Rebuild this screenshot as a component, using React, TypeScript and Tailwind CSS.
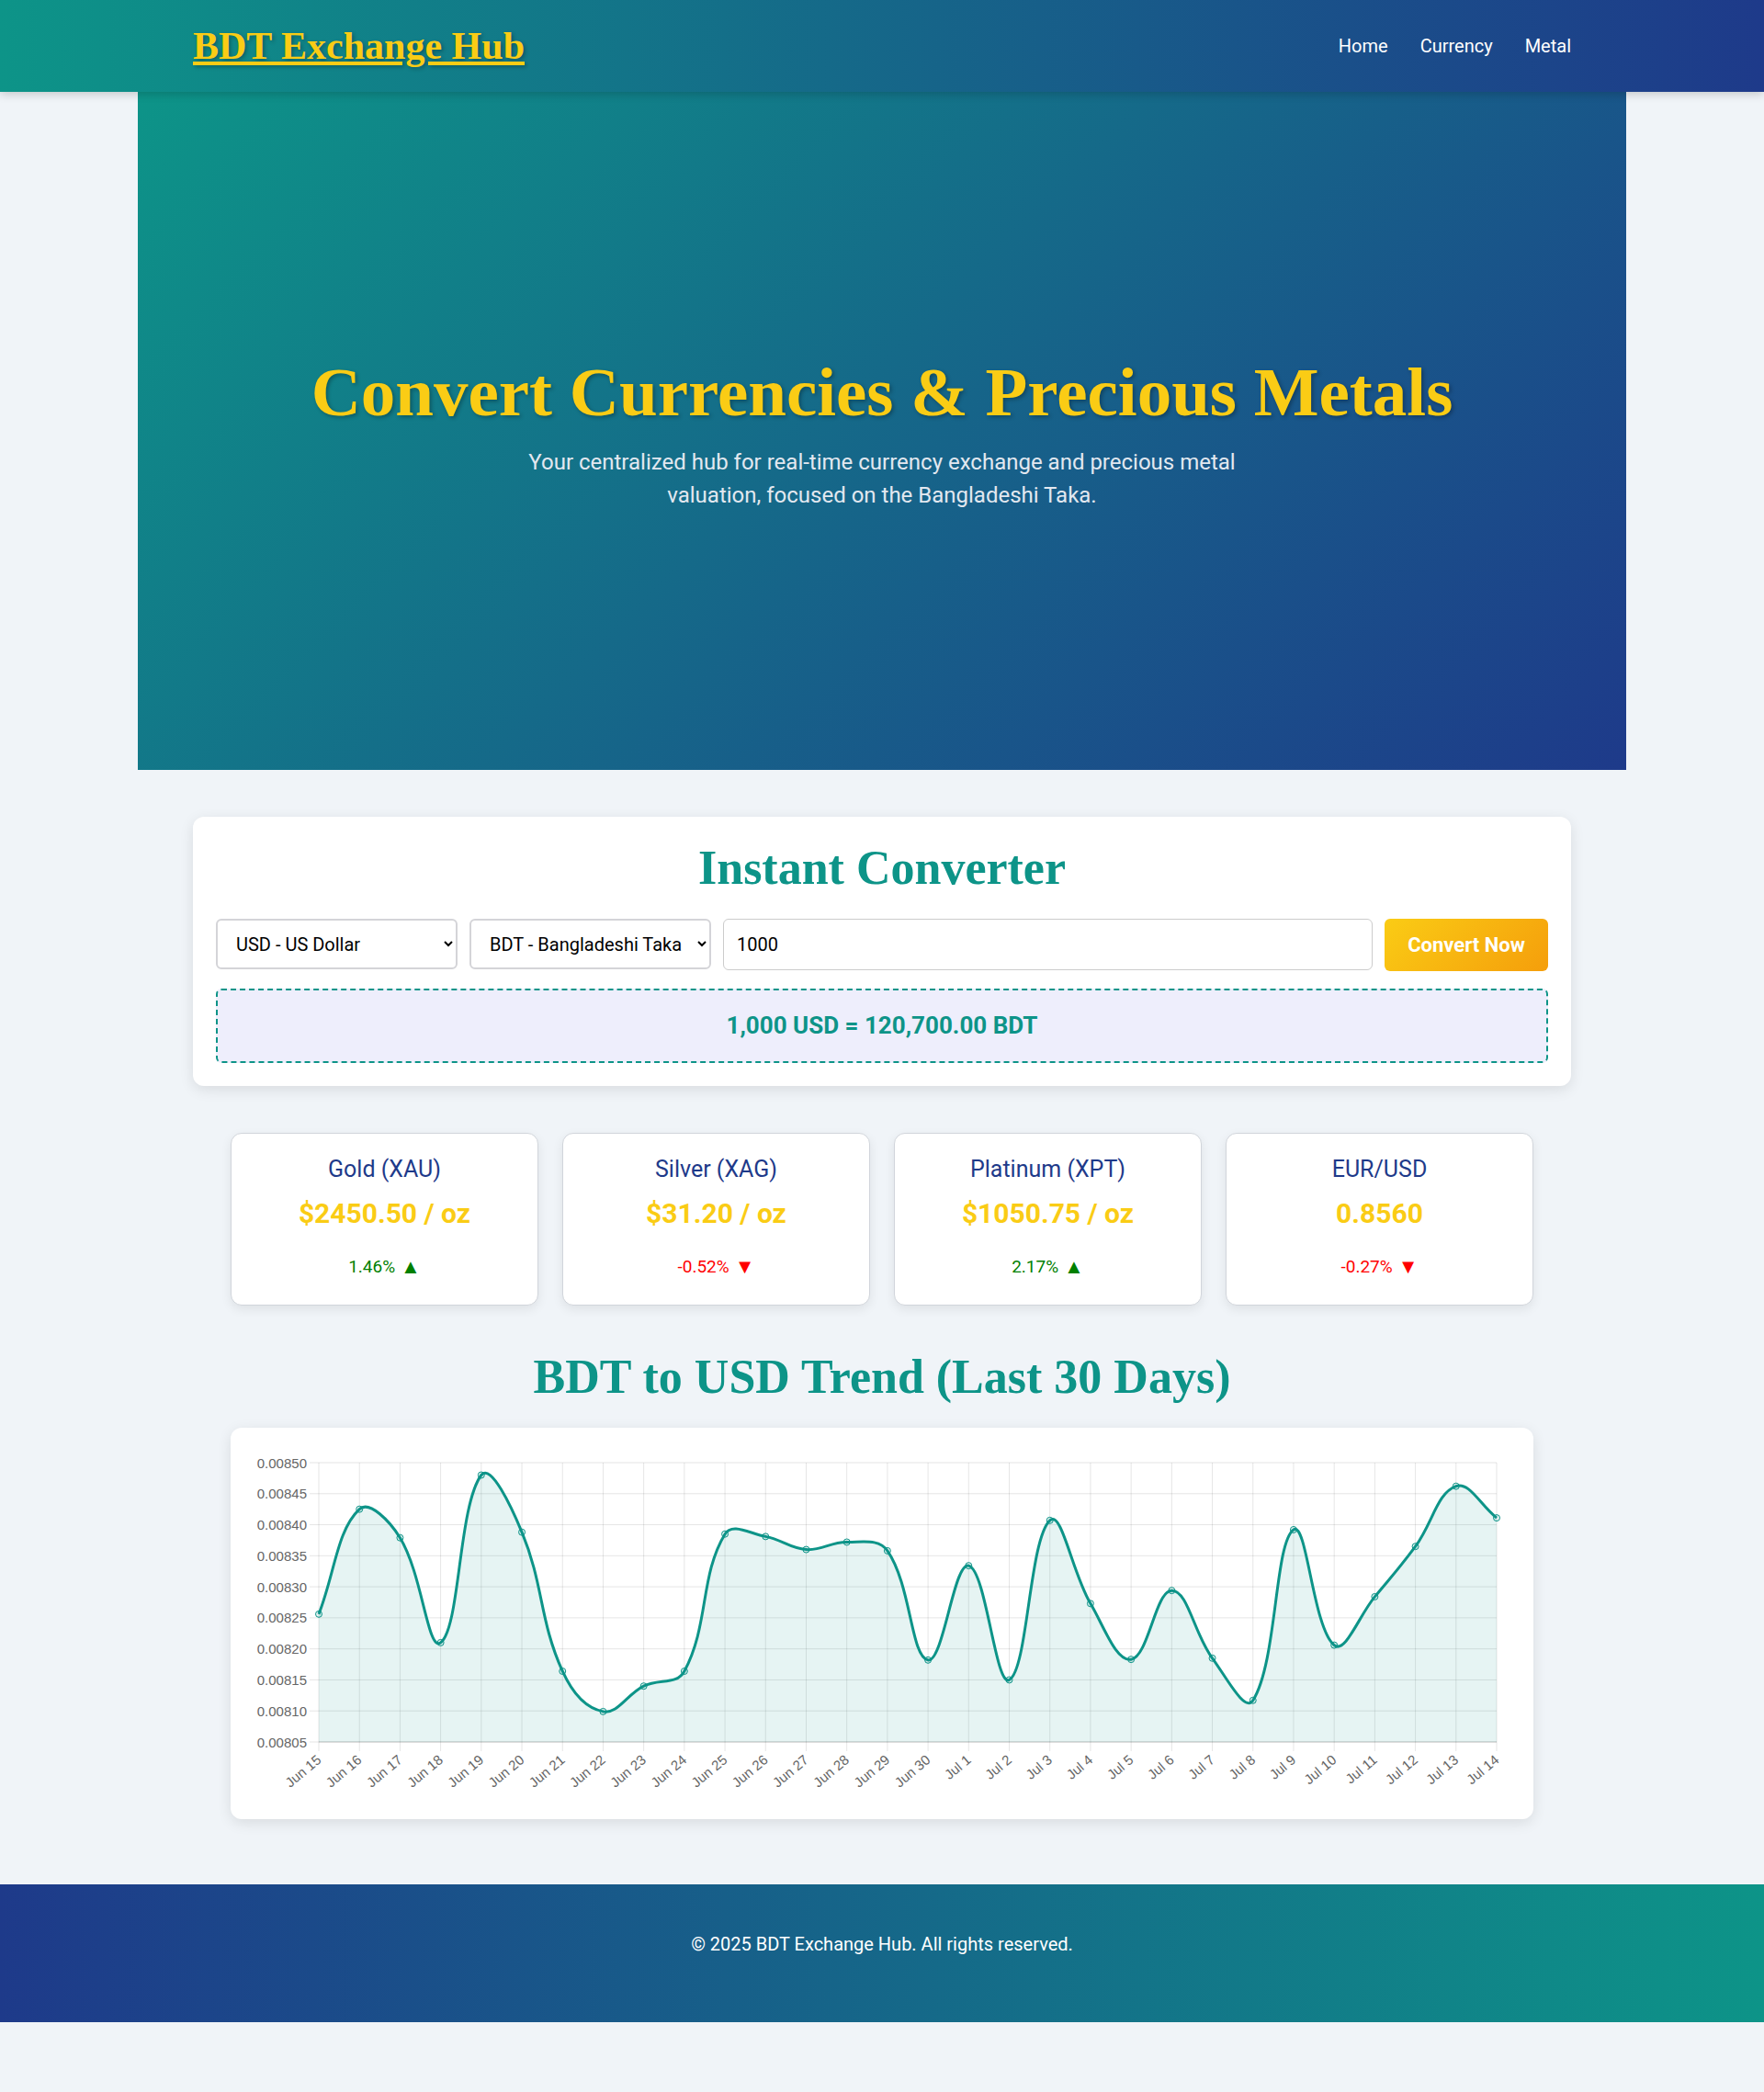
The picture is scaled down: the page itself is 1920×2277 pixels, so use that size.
import React from 'react'

const serif = "font-['Liberation_Serif',serif]"

const rates = [
  0.008256, 0.008425, 0.008379, 0.00821, 0.00848, 0.008388, 0.008164, 0.008099, 0.00814, 0.008164,
  0.008385, 0.008381, 0.00836, 0.008372, 0.008358, 0.008182, 0.008334, 0.00815, 0.008407, 0.008273,
  0.008183, 0.008294, 0.008185, 0.008117, 0.008392, 0.008206, 0.008284, 0.008365, 0.008462, 0.008411,
]

const days = [
  ...Array.from({ length: 16 }, (_, i) => `Jun ${15 + i}`),
  ...Array.from({ length: 14 }, (_, i) => `Jul ${1 + i}`),
]

const markets = [
  { name: 'Gold (XAU)', price: '$2450.50 / oz', change: '1.46%', up: true },
  { name: 'Silver (XAG)', price: '$31.20 / oz', change: '-0.52%', up: false },
  { name: 'Platinum (XPT)', price: '$1050.75 / oz', change: '2.17%', up: true },
  { name: 'EUR/USD', price: '0.8560', change: '-0.27%', up: false },
]

// chart geometry (svg units = px)
const W = 1368
const H = 376
const L = 71
const R = 1353
const T = 13
const B = 317
const MIN = 0.00805
const MAX = 0.0085

const xAt = (i: number) => L + (i * (R - L)) / (rates.length - 1)
const yAt = (v: number) => B - ((v - MIN) / (MAX - MIN)) * (B - T)

// same smoothing as a tension 0.4 line chart
function smoothPath(pts: { x: number; y: number }[]) {
  const clampY = (y: number) => Math.min(B, Math.max(T, y))
  const cps = pts.map((cur, i) => {
    const prev = pts[i - 1] ?? cur
    const next = pts[i + 1] ?? cur
    const d01 = Math.hypot(cur.x - prev.x, cur.y - prev.y)
    const d12 = Math.hypot(next.x - cur.x, next.y - cur.y)
    let s01 = d01 / (d01 + d12)
    let s12 = d12 / (d01 + d12)
    if (isNaN(s01)) s01 = 0
    if (isNaN(s12)) s12 = 0
    const fa = 0.4 * s01
    const fb = 0.4 * s12
    return {
      px: cur.x - fa * (next.x - prev.x),
      py: clampY(cur.y - fa * (next.y - prev.y)),
      nx: cur.x + fb * (next.x - prev.x),
      ny: clampY(cur.y + fb * (next.y - prev.y)),
    }
  })
  let d = `M${pts[0].x},${pts[0].y}`
  for (let i = 1; i < pts.length; i++) {
    d += ` C${cps[i - 1].nx},${cps[i - 1].ny} ${cps[i].px},${cps[i].py} ${pts[i].x},${pts[i].y}`
  }
  return d
}

const TrendChart = () => {
  const pts = rates.map((v, i) => ({ x: xAt(i), y: yAt(v) }))
  const line = smoothPath(pts)
  const area = `${line} L${R},${B} L${L},${B} Z`
  const ticks = Array.from({ length: 10 }, (_, i) => MAX - i * 0.00005)

  return (
    <svg width={W} height={H} viewBox={`0 0 ${W} ${H}`} className="block">
      {ticks.map((t) => (
        <g key={t}>
          <line x1={L - 10} x2={R} y1={yAt(t)} y2={yAt(t)} stroke="rgba(0,0,0,0.1)" strokeWidth={1} />
          <text
            x={58}
            y={yAt(t)}
            textAnchor="end"
            dominantBaseline="central"
            fontSize={15}
            fill="#666"
            fontFamily="Liberation Sans, Arial, sans-serif"
          >
            {t.toFixed(5)}
          </text>
        </g>
      ))}
      {days.map((d, i) => (
        <g key={d}>
          <line x1={xAt(i)} x2={xAt(i)} y1={T} y2={B + 10} stroke="rgba(0,0,0,0.1)" strokeWidth={1} />
          <text
            transform={`translate(${xAt(i)},${B + 17}) rotate(-40)`}
            textAnchor="end"
            dominantBaseline="central"
            fontSize={15}
            fill="#666"
            fontFamily="Liberation Sans, Arial, sans-serif"
          >
            {d}
          </text>
        </g>
      ))}
      <line x1={L} x2={R} y1={B} y2={B} stroke="rgba(0,0,0,0.18)" strokeWidth={1} />
      <path d={area} fill="rgba(13,148,136,0.1)" />
      <path d={line} fill="none" stroke="#0d9488" strokeWidth={3} />
      {pts.map((p, i) => (
        <circle key={i} cx={p.x} cy={p.y} r={3.5} fill="rgba(13,148,136,0.1)" stroke="#0d9488" strokeWidth={1} />
      ))}
    </svg>
  )
}

export default function App() {
  return (
    <div className="min-h-screen bg-[#f0f4f8] font-['Roboto',sans-serif]">
      <header className="relative z-10 h-[100px] bg-[linear-gradient(90deg,#0d9488,#1e3a8a)] shadow-[0_2px_10px_rgba(0,0,0,0.2)]">
        <div className="mx-auto flex h-full w-[1500px] items-center justify-between">
          <a
            href="#"
            className={`${serif} text-[42px] font-bold leading-none text-[#facc15] underline [text-shadow:2px_2px_4px_rgba(0,0,0,0.3)]`}
          >
            BDT Exchange Hub
          </a>
          <nav className="flex items-center gap-[35px] text-[20px] text-white">
            <a href="#">Home</a>
            <a href="#">Currency</a>
            <a href="#">Metal</a>
          </nav>
        </div>
      </header>

      <section className="mx-auto flex h-[738px] w-[1620px] flex-col items-center justify-center bg-[linear-gradient(135deg,#0d9488,#1e3a8a)] text-center">
        <h1
          className={`${serif} mb-[13px] text-[75px] font-bold leading-[1.2] text-[#facc15] [text-shadow:2px_2px_4px_rgba(0,0,0,0.3)]`}
        >
          Convert Currencies &amp; Precious Metals
        </h1>
        <p className="max-w-[820px] text-[24px] leading-[36px] text-[#e2e8f0]">
          Your centralized hub for real-time currency exchange and precious metal valuation, focused on the
          Bangladeshi Taka.
        </p>
      </section>

      <main className="mx-auto w-[1500px] pt-[51px]">
        <div className="rounded-xl bg-white p-[25px] shadow-[0_4px_15px_rgba(0,0,0,0.1)]">
          <h2 className={`${serif} mb-[24px] text-center text-[52px] font-bold leading-[1.2] text-[#0d9488]`}>
            Instant Converter
          </h2>
          <div className="flex gap-[13px]">
            <select className="h-[55px] w-[263px] rounded-md border-2 border-[#d4d4d8] bg-white pl-[16px] pr-[8px] text-[20px] text-black">
              <option>USD - US Dollar</option>
            </select>
            <select className="h-[55px] w-[263px] rounded-md border-2 border-[#d4d4d8] bg-white pl-[16px] pr-[8px] text-[20px] text-black">
              <option>BDT - Bangladeshi Taka</option>
            </select>
            <input
              defaultValue="1000"
              className="h-[56px] flex-1 rounded-md border border-[#cccccc] bg-white px-[14px] text-[20px] text-black"
            />
            <button className="h-[57px] w-[178px] rounded-md bg-[linear-gradient(135deg,#facc15,#f59e0b)] text-[22px] font-bold text-white">
              Convert Now
            </button>
          </div>
          <div className="mt-[19px] flex h-[81px] items-center justify-center rounded-md border-2 border-dashed border-[#0d9488] bg-[#eeeefc] text-[26px] font-bold text-[#0d9488]">
            1,000 USD = 120,700.00 BDT
          </div>
        </div>

        <div className="mx-auto mt-[51px] grid w-[1418px] grid-cols-4 gap-[26px]">
          {markets.map((m) => (
            <div
              key={m.name}
              className="flex flex-col items-center rounded-xl border border-[#d1d5db] bg-white pb-[29px] pt-[24px] shadow-[0_4px_12px_rgba(0,0,0,0.08)]"
            >
              <div className="text-[25px] leading-[30px] text-[#1e3a8a]">{m.name}</div>
              <div className="mt-[15px] text-[30px] font-bold leading-[36px] text-[#facc15]">{m.price}</div>
              <div
                className={`mt-[28px] flex items-center gap-[6px] text-[19px] leading-[24px] ${
                  m.up ? 'text-[#008000]' : 'text-[#ff0000]'
                }`}
              >
                <span>{m.change}</span>
                <span className="text-[22px] leading-[24px]">{m.up ? '▲' : '▼'}</span>
              </div>
            </div>
          ))}
        </div>

        <h2 className={`${serif} mt-[47px] text-center text-[52px] font-bold leading-[1.2] text-[#0d9488]`}>
          BDT to USD Trend (Last 30 Days)
        </h2>
        <div className="mx-auto mt-[23px] w-[1418px] rounded-xl bg-white p-[25px] shadow-[0_4px_15px_rgba(0,0,0,0.1)]">
          <TrendChart />
        </div>
      </main>

      <footer className="mt-[71px] h-[150px] bg-[linear-gradient(90deg,#1e3a8a,#0d9488)] pt-[53px] text-center text-[20px] leading-[24px] text-white">
        © 2025 BDT Exchange Hub. All rights reserved.
      </footer>
    </div>
  )
}
